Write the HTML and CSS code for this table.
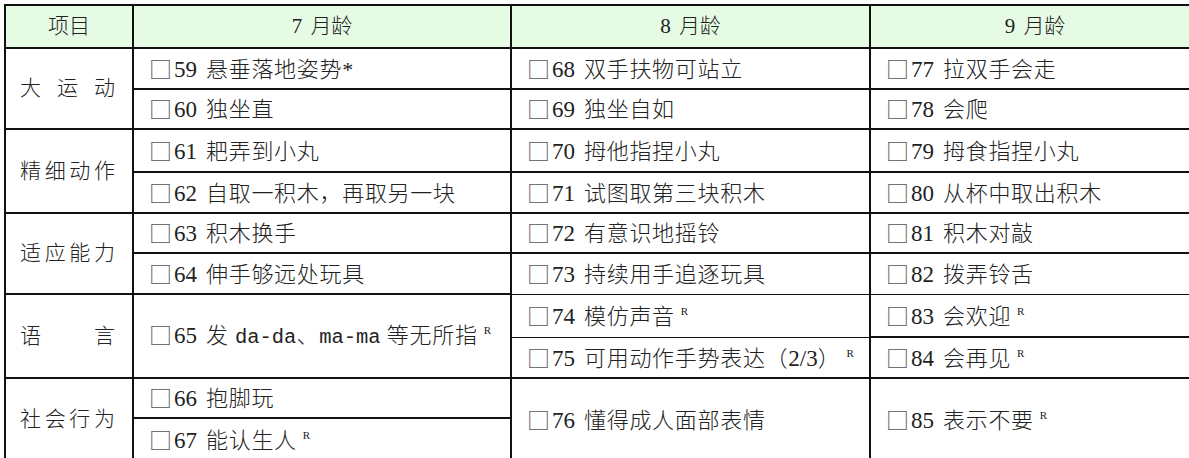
FILE: index.html
```html
<!DOCTYPE html>
<html lang="zh-CN">
<head>
<meta charset="utf-8">
<title>7-9 月龄发育项目</title>
<link rel="stylesheet" href="styles.css">
</head>
<body>
<div class="table">
  <div class="cell head">项目</div>
  <div class="cell head">7 月龄</div>
  <div class="cell head">8 月龄</div>
  <div class="cell head">9 月龄</div>

  <div class="cell label span2"><span class="jt">大运动</span></div>
  <div class="cell item"><span class="t"><span class="box">□</span><span class="num">59</span>悬垂落地姿势<span class="ast">*</span></span></div>
  <div class="cell item"><span class="t"><span class="box">□</span><span class="num">68</span>双手扶物可站立</span></div>
  <div class="cell item"><span class="t"><span class="box">□</span><span class="num">77</span>拉双手会走</span></div>
  <div class="cell item"><span class="t"><span class="box">□</span><span class="num">60</span>独坐直</span></div>
  <div class="cell item"><span class="t"><span class="box">□</span><span class="num">69</span>独坐自如</span></div>
  <div class="cell item"><span class="t"><span class="box">□</span><span class="num">78</span>会爬</span></div>

  <div class="cell label span2"><span class="jt">精细动作</span></div>
  <div class="cell item"><span class="t"><span class="box">□</span><span class="num">61</span>耙弄到小丸</span></div>
  <div class="cell item"><span class="t"><span class="box">□</span><span class="num">70</span>拇他指捏小丸</span></div>
  <div class="cell item"><span class="t"><span class="box">□</span><span class="num">79</span>拇食指捏小丸</span></div>
  <div class="cell item"><span class="t"><span class="box">□</span><span class="num">62</span>自取一积木，再取另一块</span></div>
  <div class="cell item"><span class="t"><span class="box">□</span><span class="num">71</span>试图取第三块积木</span></div>
  <div class="cell item"><span class="t"><span class="box">□</span><span class="num">80</span>从杯中取出积木</span></div>

  <div class="cell label span2"><span class="jt">适应能力</span></div>
  <div class="cell item"><span class="t"><span class="box">□</span><span class="num">63</span>积木换手</span></div>
  <div class="cell item"><span class="t"><span class="box">□</span><span class="num">72</span>有意识地摇铃</span></div>
  <div class="cell item"><span class="t"><span class="box">□</span><span class="num">81</span>积木对敲</span></div>
  <div class="cell item"><span class="t"><span class="box">□</span><span class="num">64</span>伸手够远处玩具</span></div>
  <div class="cell item thin"><span class="t"><span class="box">□</span><span class="num">73</span>持续用手追逐玩具</span></div>
  <div class="cell item thin"><span class="t"><span class="box">□</span><span class="num">82</span>拨弄铃舌</span></div>

  <div class="cell label span2"><span class="jt">语言</span></div>
  <div class="cell item span2"><span class="t"><span class="box">□</span><span class="num">65</span>发 <span class="mono">da-da</span>、<span class="mono">ma-ma</span> 等无所指<sup class="r">R</sup></span></div>
  <div class="cell item thin"><span class="t"><span class="box">□</span><span class="num">74</span>模仿声音<sup class="r">R</sup></span></div>
  <div class="cell item"><span class="t"><span class="box">□</span><span class="num">83</span>会欢迎<sup class="r">R</sup></span></div>
  <div class="cell item"><span class="t"><span class="box">□</span><span class="num">75</span>可用动作手势表达（<span class="num0">2/3</span>）<sup class="r">R</sup></span></div>
  <div class="cell item"><span class="t"><span class="box">□</span><span class="num">84</span>会再见<sup class="r">R</sup></span></div>

  <div class="cell label span2"><span class="jt">社会行为</span></div>
  <div class="cell item"><span class="t"><span class="box">□</span><span class="num">66</span>抱脚玩</span></div>
  <div class="cell item span2"><span class="t"><span class="box">□</span><span class="num">76</span>懂得成人面部表情</span></div>
  <div class="cell item span2"><span class="t"><span class="box">□</span><span class="num">85</span>表示不要<sup class="r">R</sup></span></div>
  <div class="cell item"><span class="t"><span class="box">□</span><span class="num">67</span>能认生人<sup class="r">R</sup></span></div>
</div>
</body>
</html>
```

FILE: styles.css
```css
html, body {
  margin: 0;
  padding: 0;
  background: #ffffff;
  overflow: hidden;
}

body {
  width: 1189px;
  height: 458px;
  font-family: "Liberation Serif", "Noto Sans CJK SC", serif;
  font-weight: 300;
  color: #222222;
}

.table {
  margin: 4px 0 0 4px;
  display: grid;
  grid-template-columns: 128px 378px 359px 330px;
  grid-template-rows: 43px 41px 40px 43px 41px 40px 41px 43px 41px 40px 43px;
  border-top: 2px solid #111;
  border-left: 2px solid #111;
  width: max-content;
}

.cell {
  box-sizing: border-box;
  border-right: 2px solid #111;
  border-bottom: 2px solid #111;
  display: flex;
  align-items: center;
  font-size: 22px;
  white-space: nowrap;
  line-height: 1;
}

.head {
  background: #e6fbe4;
  justify-content: center;
  font-size: 21px;
  word-spacing: 3px;
}

.label {
  padding: 0 17px 0 14px;
  font-size: 21px;
}

.jt {
  display: block;
  width: 100%;
  text-align: justify;
  text-align-last: justify;
}

.span2 {
  grid-row: span 2;
}

.item {
  padding-left: 14px;
}

.t {
  letter-spacing: 0.7px;
}

.thin {
  border-bottom-width: 1px;
}

.box {
  font-family: "Noto Sans CJK SC", sans-serif;
  font-weight: 400;
  color: #555;
  font-size: 23px;
  margin-left: 1px;
  margin-right: 2px;
  letter-spacing: 0;
  vertical-align: -1px;
}

.num {
  font-size: 23px;
  letter-spacing: 0;
  margin-right: 9px;
}

.num0 {
  font-size: 23px;
  letter-spacing: 0;
}

.mono {
  font-family: "Liberation Mono", monospace;
  font-size: 20.5px;
  letter-spacing: 0;
}

.ast {
  font-size: 22px;
}

.r {
  font-size: 11px;
  margin-left: 6px;
  vertical-align: 9px;
  letter-spacing: 0;
}
```
